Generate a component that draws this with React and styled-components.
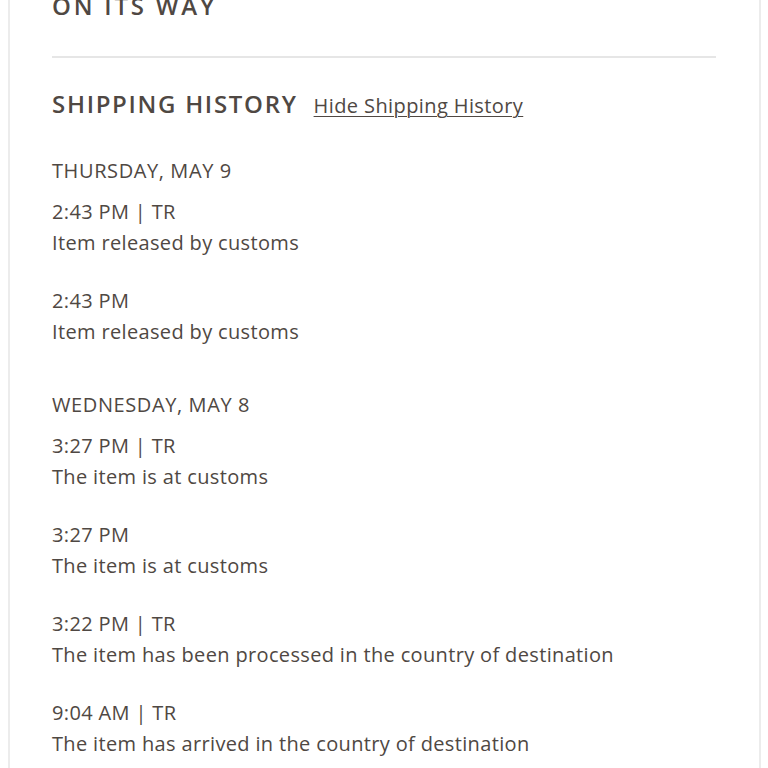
import React from 'react';
import styled, { createGlobalStyle } from 'styled-components';

const GlobalStyle = createGlobalStyle`
  html, body {
    margin: 0;
    padding: 0;
    background: #ffffff;
    overflow: hidden;
  }
  body {
    font-family: 'Open Sans', 'Lato', sans-serif;
    color: #4f4843;
  }
`;

const history = [
  {
    day: 'THURSDAY, MAY 9',
    events: [
      { time: '2:43 PM | TR', text: 'Item released by customs' },
      { time: '2:43 PM', text: 'Item released by customs' },
    ],
  },
  {
    day: 'WEDNESDAY, MAY 8',
    events: [
      { time: '3:27 PM | TR', text: 'The item is at customs' },
      { time: '3:27 PM', text: 'The item is at customs' },
      { time: '3:22 PM | TR', text: 'The item has been processed in the country of destination' },
      { time: '9:04 AM | TR', text: 'The item has arrived in the country of destination' },
    ],
  },
];

const App = () => {
  return (
    <>
      <GlobalStyle />
      <Card>
        <Status>ON ITS WAY</Status>
        <Divider />
        <HistoryHeader>
          <SectionTitle>SHIPPING HISTORY</SectionTitle>
          <ToggleLink href="#">Hide Shipping History</ToggleLink>
        </HistoryHeader>
        {history.map(group => (
          <DayGroup key={group.day}>
            <DayLabel>{group.day}</DayLabel>
            {group.events.map((ev, i) => (
              <Event key={i}>
                <EventTime>{ev.time}</EventTime>
                <EventText>{ev.text}</EventText>
              </Event>
            ))}
          </DayGroup>
        ))}
      </Card>
    </>
  );
};

const Card = styled.div`
  margin: -11px 7px 0 8px;
  padding: 0 43px 40px 42px;
  border-left: 2px solid #ececec;
  border-right: 2px solid #ececec;
  background: #fff;
  min-height: 900px;
`;

const Status = styled.h2`
  margin: 0;
  font-size: 24px;
  line-height: 34px;
  font-weight: 600;
  letter-spacing: 2.8px;
`;

const Divider = styled.hr`
  margin: 33px 0 0;
  border: 0;
  border-top: 2px solid #e6e6e6;
`;

const HistoryHeader = styled.div`
  display: flex;
  align-items: baseline;
  gap: 16px;
  margin-top: 31px;
`;

const SectionTitle = styled.h3`
  margin: 0;
  font-size: 24px;
  line-height: 30px;
  font-weight: 600;
  letter-spacing: 1.7px;
`;

const ToggleLink = styled.a`
  font-size: 20px;
  color: #4f4843;
  letter-spacing: 0.4px;
  text-decoration: underline;
  text-underline-offset: 3px;
  text-decoration-thickness: 1px;
`;

const DayGroup = styled.section`
  margin-top: 37px;

  & + & {
    margin-top: 43px;
  }
`;

const DayLabel = styled.div`
  font-size: 20px;
  line-height: 30px;
  letter-spacing: 0.6px;
  margin-bottom: 10px;
`;

const Event = styled.div`
  & + & {
    margin-top: 27px;
  }
`;

const EventTime = styled.div`
  font-size: 20px;
  line-height: 31px;
  letter-spacing: 0.35px;
`;

const EventText = styled.div`
  font-size: 20px;
  line-height: 31px;
  letter-spacing: 0.35px;
`;

export default App;
